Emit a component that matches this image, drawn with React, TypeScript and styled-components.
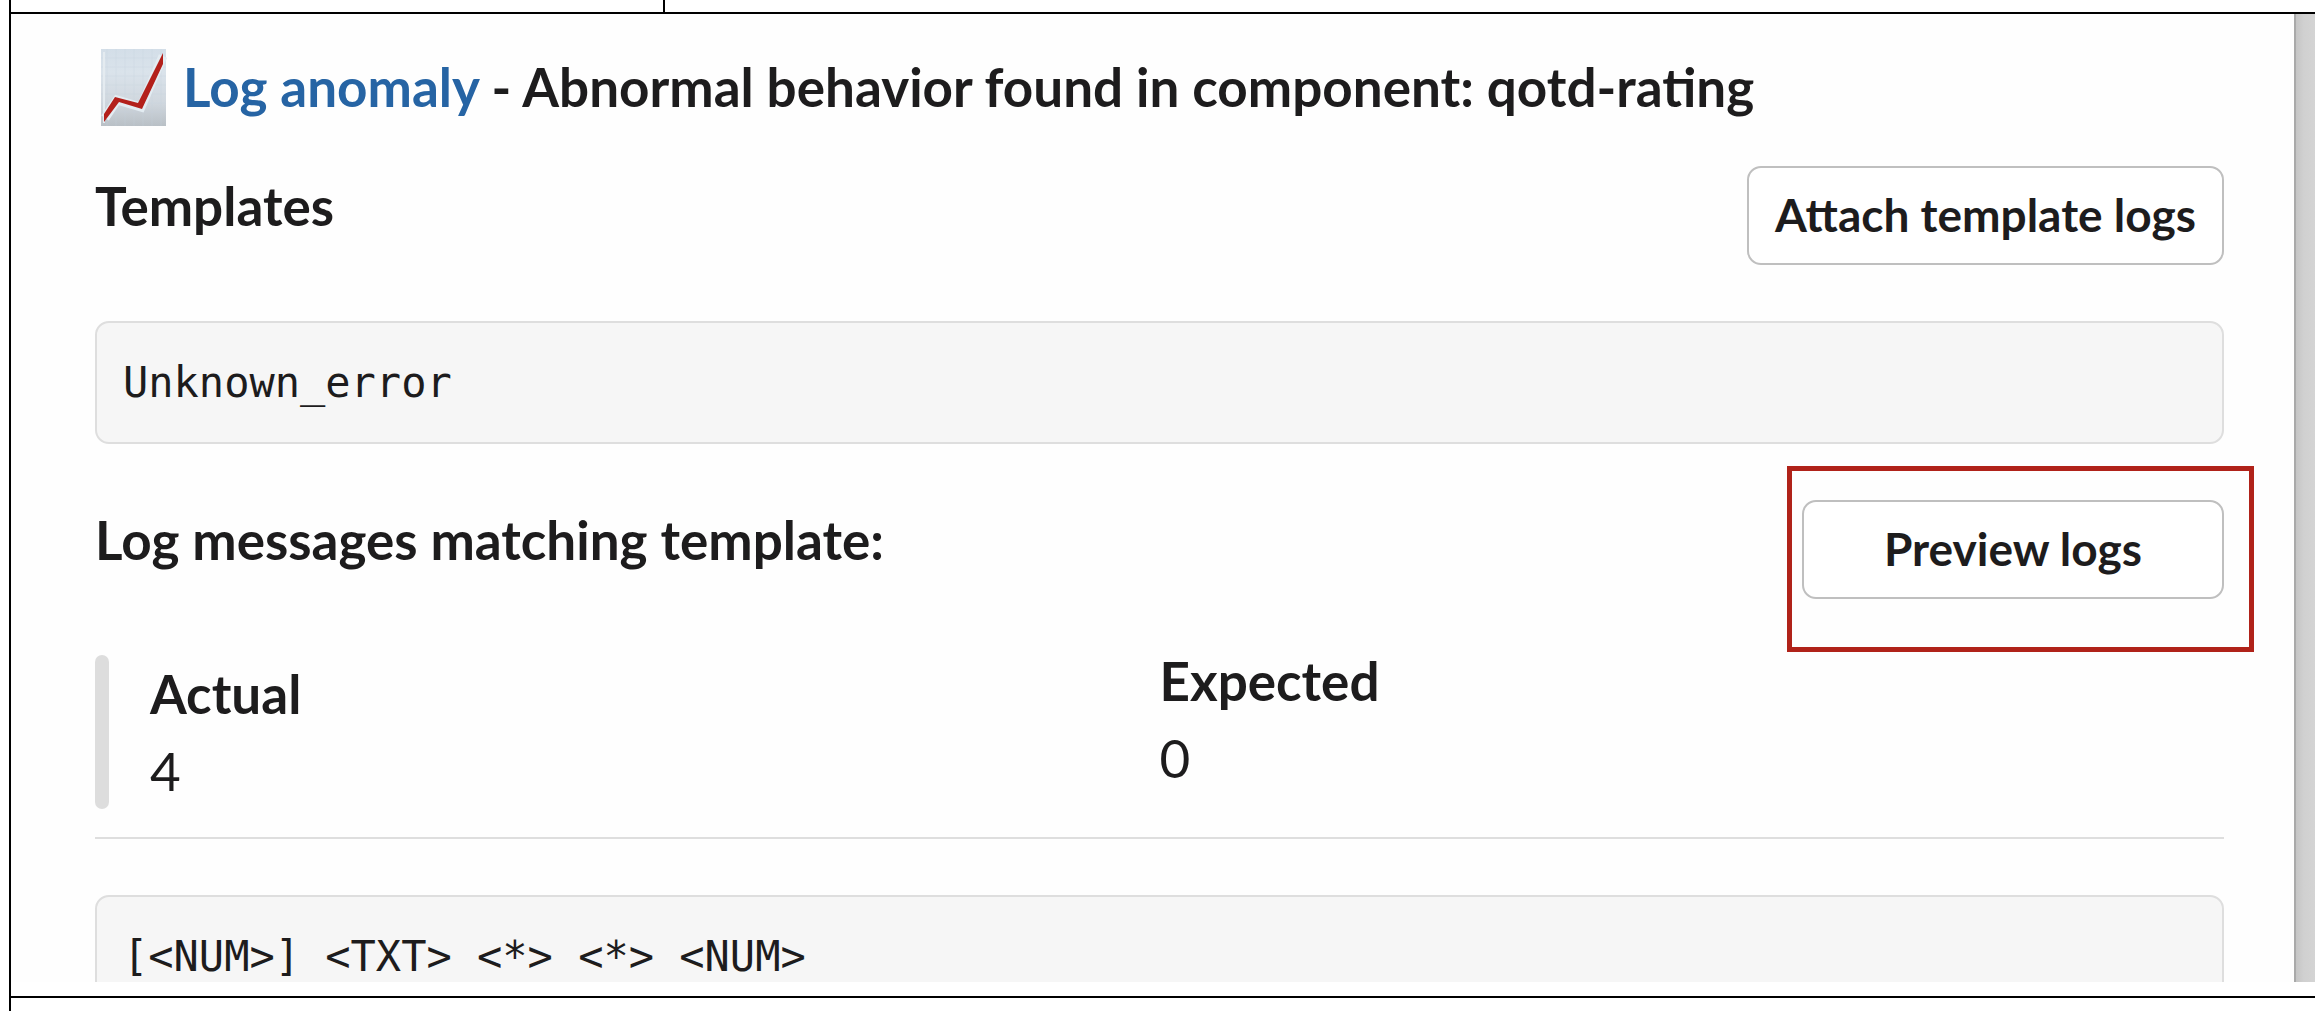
import React from 'react';
import styled, { createGlobalStyle } from 'styled-components';

const GlobalStyle = createGlobalStyle`
  *, *::before, *::after { box-sizing: border-box; }
  body {
    margin: 0;
    background: #fff;
    color: #1d1c1d;
    font-family: Lato, "Liberation Sans", sans-serif;
    font-size: 53px;
    line-height: 77px;
  }
`;

const Page = styled.div`
  display: grid;
  grid-template-rows: 14px minmax(0, 1fr) 15px;
  height: 100vh;
  margin-left: 9px;
  border-left: 2px solid #000;
  overflow: hidden;
`;

const HeadRow = styled.div`
  display: grid;
  grid-template-columns: 654px 1fr;
  border-bottom: 2px solid #000;
`;

const HeadCell = styled.div<{ $divided?: boolean }>`
  border-right: ${(p) => (p.$divided ? '2px solid #000' : 'none')};
`;

const FootRow = styled.div`
  border-top: 2px solid #000;
`;

const Capture = styled.div`
  display: grid;
  grid-template-columns: minmax(0, 1fr) 21px;
  margin-bottom: 14px;
  overflow: hidden;
`;

const Message = styled.main`
  display: flex;
  flex-direction: column;
  min-height: 0;
  padding: 34px 70px 0 84px;
  background: #fefefe;
`;

const Backdrop = styled.div`
  border-left: 2px solid #a9a9a9;
  background: linear-gradient(to right, #c5c5c5, #d0d0d0 40%, #d4d4d4);
`;

const Title = styled.h1`
  display: flex;
  flex: none;
  align-items: center;
  gap: 11px;
  margin: 0 0 41px;
  font-size: inherit;
  font-weight: 700;
`;

const ChartIcon = styled.svg`
  flex: none;
  width: 77px;
  height: 77px;
  overflow: visible;
`;

const TitleLink = styled.a`
  color: #2664a4;
  text-decoration: none;
`;

const Section = styled.section`
  display: flex;
  flex: none;
  align-items: flex-start;
  justify-content: space-between;
`;

const SectionTitle = styled.h2`
  margin: 0;
  padding-top: 1px;
  font-size: inherit;
  font-weight: 700;
`;

const Button = styled.button`
  height: 99px;
  min-width: 422px;
  padding: 0 26px 2px;
  border: 2px solid #bfbfbf;
  border-radius: 14px;
  background: #fff;
  color: inherit;
  font: 700 46px/77px Lato, "Liberation Sans", sans-serif;
`;

const Highlight = styled.div`
  position: relative;

  &::after {
    content: '';
    position: absolute;
    inset: -34px -30px -53px -15px;
    border: 5px solid #b02219;
    pointer-events: none;
  }
`;

const CodeBlock = styled.pre`
  flex: none;
  margin: 56px 0;
  padding: 28px 26px;
  border: 2px solid #dedede;
  border-radius: 14px;
  background: #f6f6f6;
  font: 42px/63px "DejaVu Sans Mono", "Liberation Mono", monospace;
`;

const Fields = styled.dl`
  display: grid;
  flex: none;
  grid-template-columns: 1fr 1fr;
  margin: 43px 0 28px;
`;

const Field = styled.div<{ $quoted?: boolean }>`
  display: grid;
  grid-template-columns: ${(p) => (p.$quoted ? '14px 1fr' : '1fr')};
  column-gap: 41px;
  padding-top: ${(p) => (p.$quoted ? '13px' : '0')};
`;

const QuoteBar = styled.span`
  border-radius: 7px;
  background: #dddddd;
`;

const FieldText = styled.div``;

const FieldName = styled.dt`
  font-weight: 700;
`;

const FieldValue = styled.dd`
  margin: 0;
`;

const Divider = styled.hr`
  flex: none;
  width: 100%;
  height: 2px;
  margin: 0;
  border: 0;
  background: #dedede;
`;

const gridSteps = [10, 19, 28, 37, 46, 55, 64];

function ChartEmoji() {
  return (
    <ChartIcon viewBox="0 0 77 77" aria-hidden="true">
      <defs>
        <linearGradient id="paper" x1="0" y1="0" x2="0" y2="1">
          <stop offset="0" stopColor="#d3dee8" />
          <stop offset="0.3" stopColor="#dae3eb" />
          <stop offset="0.7" stopColor="#d0d7de" />
          <stop offset="1" stopColor="#b9c0c6" />
        </linearGradient>
      </defs>
      <rect x="6" y="1" width="65" height="77" fill="url(#paper)" />
      {gridSteps.map((s) => (
        <path key={s} d={`M${s + 2} 1V78M6 ${s}H71`} stroke="#c6d3de" strokeWidth="1" opacity="0.3" />
      ))}
      <path d="M9 4V75" stroke="#e4ebf0" strokeWidth="2" />
      <path d="M10 70L22 52L46 59L68 8" fill="none" stroke="#e3ecf2" strokeWidth="9" />
      <path
        d="M9 66L20 49L43 55L68 5V16L47 61L24 54L9 74Z"
        fill="#b3201b"
      />
    </ChartIcon>
  );
}

export default function App() {
  return (
    <>
      <GlobalStyle />
      <Page>
        <HeadRow>
          <HeadCell $divided />
          <HeadCell />
        </HeadRow>
        <Capture>
          <Message>
            <Title>
              <ChartEmoji />
              <span>
                <TitleLink href="#log-anomaly">Log anomaly</TitleLink> - Abnormal behavior found in
                component: qotd-rating
              </span>
            </Title>

            <Section>
              <SectionTitle>Templates</SectionTitle>
              <Button type="button">Attach template logs</Button>
            </Section>
            <CodeBlock>Unknown_error</CodeBlock>

            <Section>
              <SectionTitle>Log messages matching template:</SectionTitle>
              <Highlight>
                <Button type="button">Preview logs</Button>
              </Highlight>
            </Section>
            <Fields>
              <Field $quoted>
                <QuoteBar />
                <FieldText>
                  <FieldName>Actual</FieldName>
                  <FieldValue>4</FieldValue>
                </FieldText>
              </Field>
              <Field>
                <FieldText>
                  <FieldName>Expected</FieldName>
                  <FieldValue>0</FieldValue>
                </FieldText>
              </Field>
            </Fields>
            <Divider />
            <CodeBlock>{'[<NUM>] <TXT> <*> <*> <NUM>'}</CodeBlock>
          </Message>
          <Backdrop />
        </Capture>
        <FootRow />
      </Page>
    </>
  );
}
